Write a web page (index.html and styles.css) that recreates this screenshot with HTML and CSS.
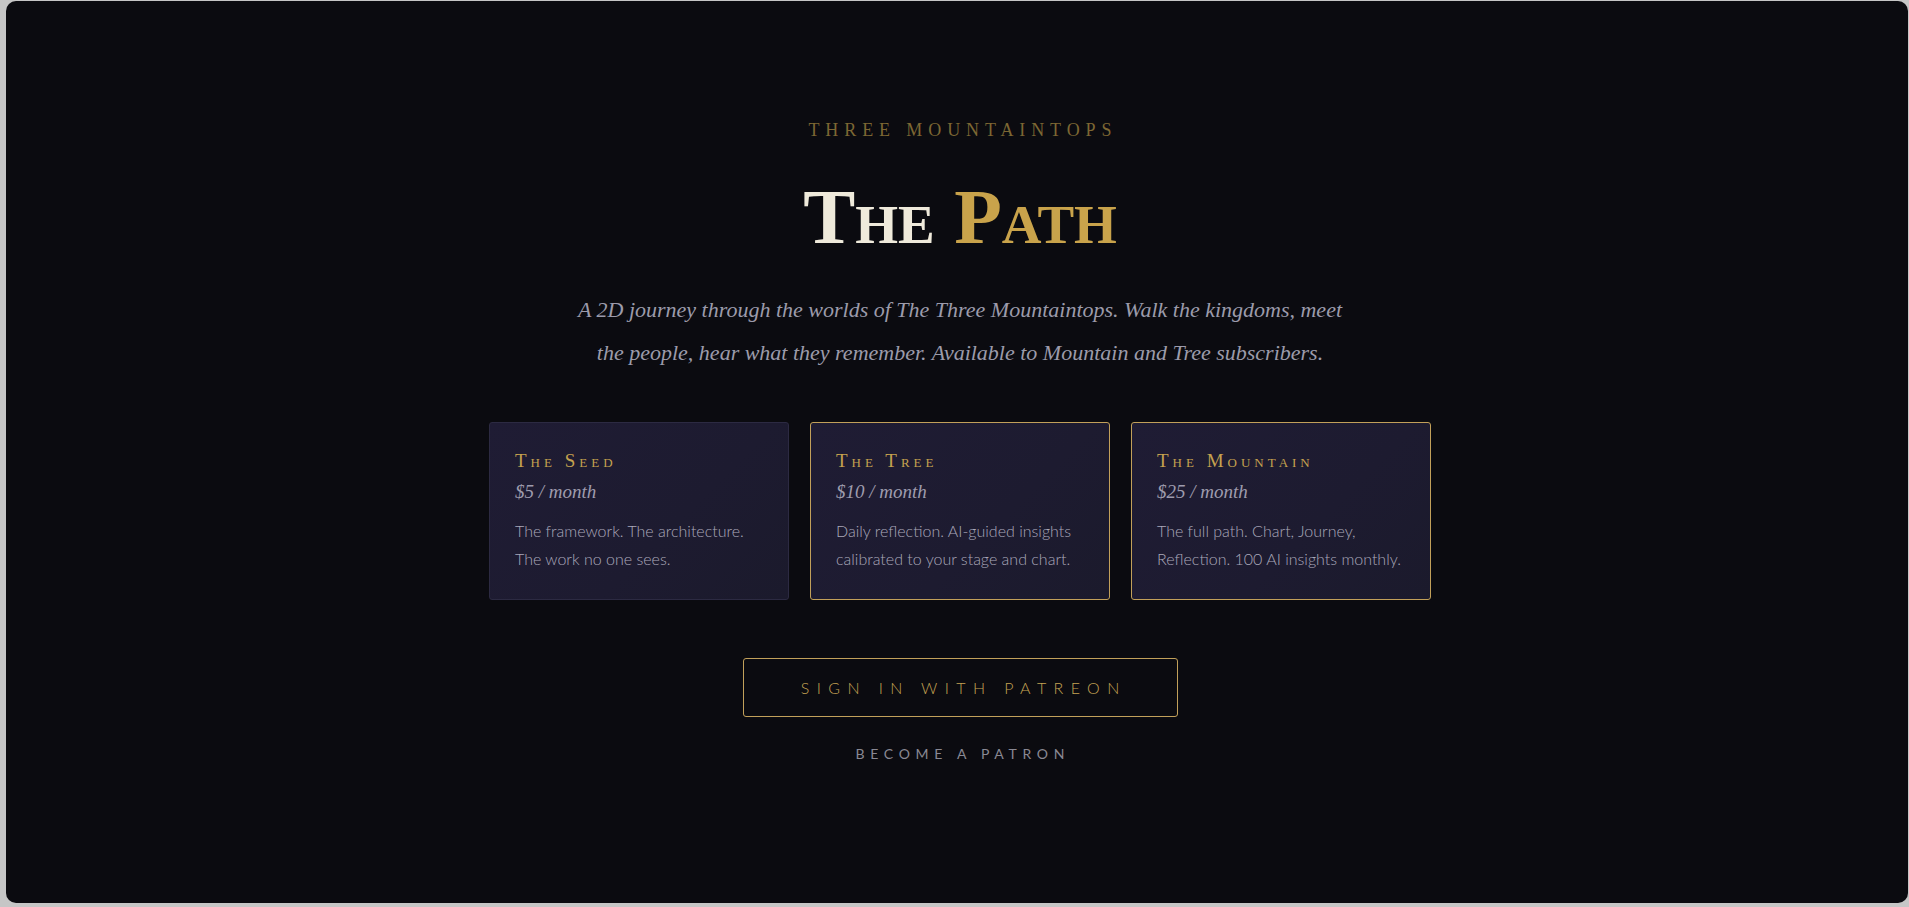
FILE: index.html
```html
<!DOCTYPE html>
<html lang="en">
<head>
<meta charset="utf-8">
<title>The Path — Three Mountaintops</title>
<link rel="stylesheet" href="styles.css">
</head>
<body>
<main class="panel">
  <p class="eyebrow">Three Mountaintops</p>
  <h1 class="title"><span class="title-light">The</span> <span class="title-gold">Path</span></h1>
  <p class="lede">A 2D journey through the worlds of The Three Mountaintops. Walk the kingdoms, meet the people, hear what they remember. Available to Mountain and Tree subscribers.</p>
  <section class="tiers">
    <article class="tier">
      <h2 class="tier-name">The Seed</h2>
      <p class="tier-price">$5 / month</p>
      <p class="tier-desc">The framework. The architecture. The work no one sees.</p>
    </article>
    <article class="tier tier-active">
      <h2 class="tier-name">The Tree</h2>
      <p class="tier-price">$10 / month</p>
      <p class="tier-desc">Daily reflection. AI-guided insights calibrated to your stage and chart.</p>
    </article>
    <article class="tier tier-active">
      <h2 class="tier-name">The Mountain</h2>
      <p class="tier-price">$25 / month</p>
      <p class="tier-desc">The full path. Chart, Journey, Reflection. 100 AI insights monthly.</p>
    </article>
  </section>
  <a class="signin" href="#">Sign in with Patreon</a>
  <a class="become" href="#">Become a Patron</a>
</main>
</body>
</html>
```
FILE: styles.css
```css
html, body {
  margin: 0;
  padding: 0;
  height: 100%;
}
body {
  background: #c6c6c6;
  padding: 1px 1px 4px 6px;
  box-sizing: border-box;
  overflow: hidden;
}
.panel {
  height: 100%;
  box-sizing: border-box;
  background: #0b0b10;
  border-radius: 10px;
  display: flex;
  flex-direction: column;
  align-items: center;
  padding-top: 117px;
  padding-left: 6px;
}
.eyebrow {
  margin: 0;
  font-family: "Liberation Serif", serif;
  font-size: 18px;
  line-height: 24px;
  letter-spacing: 5.9px;
  text-transform: uppercase;
  color: #7d6733;
  padding-left: 5.9px;
}
.title {
  margin: 37px 0 0;
  font-family: "Liberation Serif", serif;
  font-weight: 700;
  font-size: 78px;
  line-height: 75px;
  font-variant: small-caps;
  letter-spacing: 0;
}
.title-light { color: #efeadb; }
.title-gold { color: #c9a34b; }
.lede {
  margin: 34px 0 0;
  max-width: 780px;
  text-align: center;
  font-family: "Liberation Serif", serif;
  font-style: italic;
  font-size: 22px;
  line-height: 43px;
  color: #9c9bab;
}
.tiers {
  margin-top: 48px;
  display: flex;
  gap: 21px;
}
.tier {
  width: 300px;
  height: 178px;
  box-sizing: border-box;
  padding: 26px 25px 0;
  border: 1px solid #2c2a42;
  border-radius: 3px;
  background: linear-gradient(135deg, #1f1c34 0%, #1d1b30 60%, #1b1a2c 100%);
}
.tier-active {
  border-color: #c2a05a;
}
.tier-name {
  margin: 0;
  font-family: "Liberation Serif", serif;
  font-weight: 400;
  font-size: 19px;
  line-height: 24px;
  font-variant: small-caps;
  letter-spacing: 4px;
  color: #c5a24f;
}
.tier-price {
  margin: 6px 0 0;
  font-family: "Liberation Serif", serif;
  font-style: italic;
  font-size: 19px;
  line-height: 26px;
  color: #9e9cae;
}
.tier-desc {
  margin: 12px 0 0;
  font-family: Lato, "Liberation Sans", sans-serif;
  font-weight: 300;
  font-size: 16px;
  line-height: 28px;
  color: #aaa8ba;
}
.signin {
  margin-top: 58px;
  width: 435px;
  height: 59px;
  box-sizing: border-box;
  border: 1px solid #c2a05a;
  border-radius: 3px;
  display: flex;
  align-items: center;
  justify-content: center;
  padding-left: 7.4px;
  font-family: Lato, "Liberation Sans", sans-serif;
  font-weight: 300;
  font-size: 16px;
  letter-spacing: 7.4px;
  text-transform: uppercase;
  text-decoration: none;
  color: #c4a253;
}
.become {
  margin-top: 27px;
  font-family: Lato, "Liberation Sans", sans-serif;
  font-weight: 400;
  font-size: 14px;
  line-height: 20px;
  letter-spacing: 5.7px;
  padding-left: 5.7px;
  text-transform: uppercase;
  text-decoration: none;
  color: #898893;
}
```
